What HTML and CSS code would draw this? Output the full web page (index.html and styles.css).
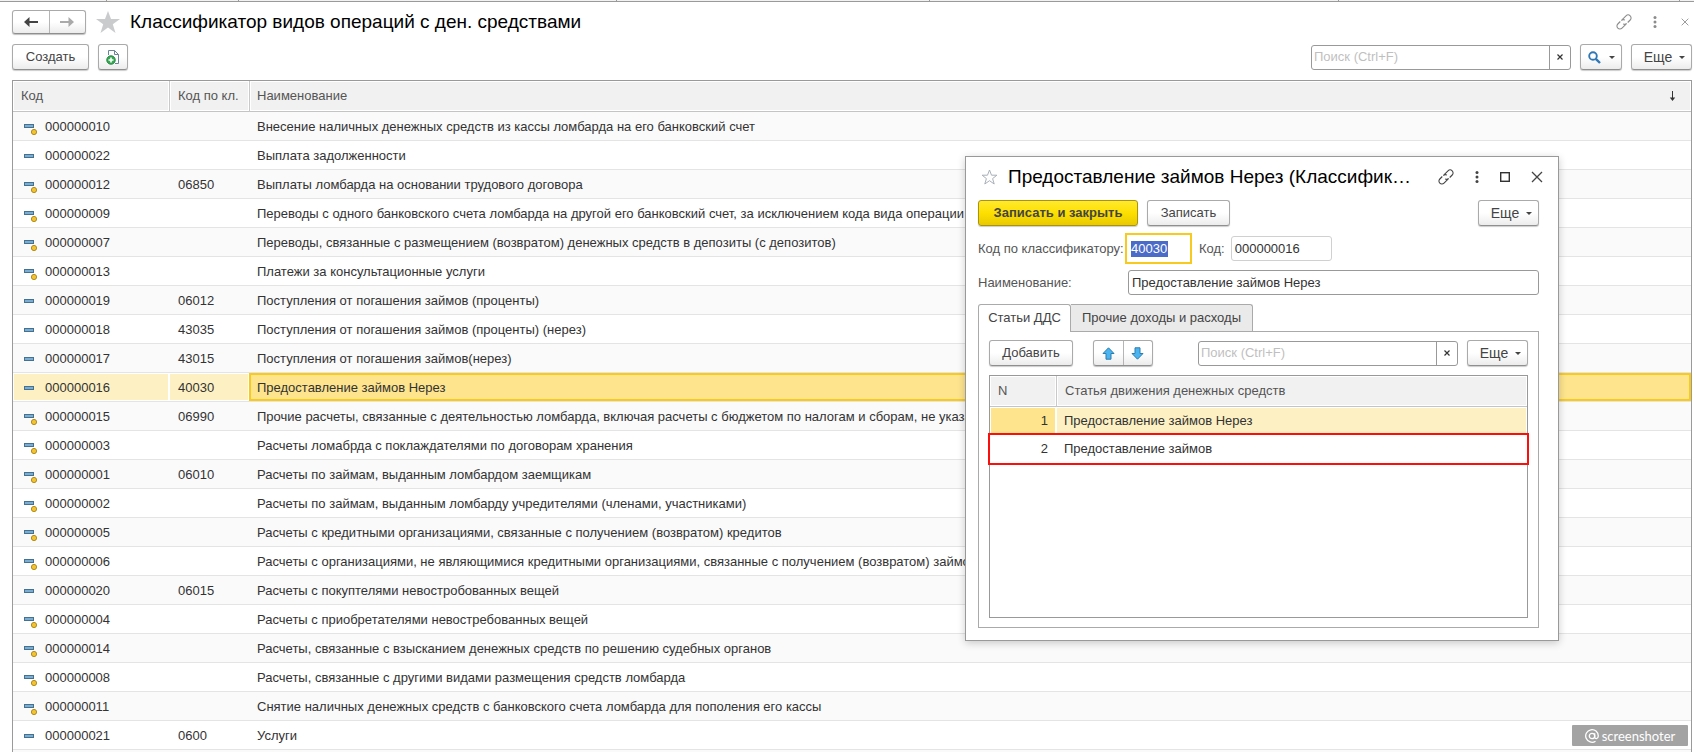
FILE: index.html
```html
<!DOCTYPE html>
<html lang="ru">
<head>
<meta charset="utf-8">
<title>Классификатор видов операций с ден. средствами</title>
<link rel="stylesheet" href="styles.css">
</head>
<body>
<svg class="sprite" aria-hidden="true">
  <symbol id="i-item" viewBox="0 0 15 14">
    <rect x="0" y="4" width="10" height="4" fill="#47708f"/>
    <rect x="1" y="5" width="8" height="2" fill="#78aed4"/>
  </symbol>
  <symbol id="i-pre" viewBox="0 0 15 14">
    <rect x="0" y="3" width="10" height="4" fill="#47708f"/>
    <rect x="1" y="4" width="8" height="2" fill="#78aed4"/>
    <circle cx="10" cy="11" r="2.600" fill="#f4c430" stroke="#b08a1c"/>
  </symbol>
  <symbol id="i-link" viewBox="0 0 16 16">
    <g fill="none" stroke="currentColor" stroke-width="1.100">
      <path d="M6.200 5.600l3.800-3.800a2.900 2.900 0 0 1 4.200 4.200L11.700 8.500"/>
      <path d="M10.700 9.500a2.900 2.900 0 0 1-3.600.4"/>
      <path d="M9.800 10.400l-3.800 3.800a2.900 2.900 0 0 1-4.200-4.200L4.300 7.500"/>
      <path d="M5.300 6.500a2.900 2.900 0 0 1 3.600-.4"/>
    </g>
  </symbol>
  <symbol id="i-dots" viewBox="0 0 4 12">
    <circle cx="2" cy="1.600" r="1.500" fill="currentColor"/><circle cx="2" cy="6" r="1.500" fill="currentColor"/><circle cx="2" cy="10.400" r="1.500" fill="currentColor"/>
  </symbol>
  <symbol id="i-x" viewBox="0 0 12 12">
    <path d="M1 1l10 10M11 1L1 11" stroke="currentColor" stroke-width="1.300" fill="none"/>
  </symbol>
  <symbol id="i-clear" viewBox="0 0 6 6">
    <path d="M.5 .5l5 5M5.500 .5l-5 5" stroke="#333" stroke-width="1.200" fill="none"/>
  </symbol>
</svg>

<div class="strip"><i></i><i></i><i></i><i></i><i></i><i></i></div>

<main class="page">
  <header class="head">
    <div class="pair nav">
      <button type="button" aria-label="Назад"><svg width="14" height="10" viewBox="0 0 14 10"><path d="M5.500 0L0 5l5.500 5V6H14V4H5.500z" fill="#444"/></svg></button>
      <button type="button" aria-label="Вперед"><svg width="14" height="10" viewBox="0 0 14 10"><path d="M8.500 0L14 5l-5.500 5V6H0V4h8.500z" fill="#aaa"/></svg></button>
    </div>
    <svg class="star" width="24" height="22" viewBox="0 0 24 22"><path d="M12 0l3 8h9l-7.200 5.200L19.500 22 12 16.600 4.500 22l2.700-8.800L0 8h9z" fill="#c9cbcd"/></svg>
    <h1>Классификатор видов операций с ден. средствами</h1>
    <div class="tools">
      <svg width="16" height="16"><use href="#i-link"/></svg>
      <svg class="dots" width="4" height="12"><use href="#i-dots"/></svg>
      <svg width="8" height="8"><use href="#i-x"/></svg>
    </div>
  </header>

  <div class="bar">
    <button type="button" class="btn create">Создать</button>
    <button type="button" class="btn copy" aria-label="Создать копированием"><svg width="14" height="16" viewBox="0 0 14 16"><path d="M2.500 6V1.500h6l4 4v9H9" fill="#fff" stroke="#6b8499"/><path d="M8.500 1.500v4h4" fill="none" stroke="#6b8499"/><circle cx="5" cy="11" r="4.300" fill="#34a853" stroke="#1d7f38" stroke-width=".8"/><path d="M5 8.500v5M2.500 11h5" stroke="#fff" stroke-width="1.600"/></svg></button>
    <div class="search"><input type="text" placeholder="Поиск (Ctrl+F)" aria-label="Поиск"><button type="button" aria-label="Очистить"><svg width="6" height="6"><use href="#i-clear"/></svg></button></div>
    <button type="button" class="btn find" aria-label="Найти"><svg width="13" height="13" viewBox="0 0 13 13"><circle cx="5" cy="5" r="3.800" fill="none" stroke="#2f78b5" stroke-width="1.900"/><path d="M7.800 7.800l4.200 4.200" stroke="#2f78b5" stroke-width="2.400"/></svg><i class="caret"></i></button>
    <button type="button" class="btn more">Еще<i class="caret"></i></button>
  </div>

  <table class="list">
    <colgroup><col class="c-code"><col class="c-cls"><col></colgroup>
    <thead><tr><th>Код</th><th>Код по кл.</th><th><div class="sort">Наименование<svg width="7" height="10" viewBox="0 0 7 10"><path d="M3.500 0v8" stroke="#333"/><path d="M.8 6.500h5.400L3.500 10z" fill="#333"/></svg></div></th></tr></thead>
    <tbody>
      <tr><td><svg class="ic"><use href="#i-pre"/></svg>000000010</td><td></td><td>Внесение наличных денежных средств из кассы ломбарда на его банковский счет</td></tr>
      <tr><td><svg class="ic"><use href="#i-item"/></svg>000000022</td><td></td><td>Выплата задолженности</td></tr>
      <tr><td><svg class="ic"><use href="#i-pre"/></svg>000000012</td><td>06850</td><td>Выплаты ломбарда на основании трудового договора</td></tr>
      <tr><td><svg class="ic"><use href="#i-pre"/></svg>000000009</td><td></td><td>Переводы с одного банковского счета ломбарда на другой его банковский счет, за исключением кода вида операции</td></tr>
      <tr><td><svg class="ic"><use href="#i-pre"/></svg>000000007</td><td></td><td>Переводы, связанные с размещением (возвратом) денежных средств в депозиты (с депозитов)</td></tr>
      <tr><td><svg class="ic"><use href="#i-pre"/></svg>000000013</td><td></td><td>Платежи за консультационные услуги</td></tr>
      <tr><td><svg class="ic"><use href="#i-item"/></svg>000000019</td><td>06012</td><td>Поступления от погашения займов (проценты)</td></tr>
      <tr><td><svg class="ic"><use href="#i-item"/></svg>000000018</td><td>43035</td><td>Поступления от погашения займов (проценты) (нерез)</td></tr>
      <tr><td><svg class="ic"><use href="#i-item"/></svg>000000017</td><td>43015</td><td>Поступления от погашения займов(нерез)</td></tr>
      <tr class="current"><td><svg class="ic"><use href="#i-item"/></svg>000000016</td><td>40030</td><td>Предоставление займов Нерез</td></tr>
      <tr><td><svg class="ic"><use href="#i-pre"/></svg>000000015</td><td>06990</td><td>Прочие расчеты, связанные с деятельностью ломбарда, включая расчеты с бюджетом по налогам и сборам, не указанные</td></tr>
      <tr><td><svg class="ic"><use href="#i-pre"/></svg>000000003</td><td></td><td>Расчеты ломабрда с поклаждателями по договорам хранения</td></tr>
      <tr><td><svg class="ic"><use href="#i-pre"/></svg>000000001</td><td>06010</td><td>Расчеты по займам, выданным ломбардом заемщикам</td></tr>
      <tr><td><svg class="ic"><use href="#i-pre"/></svg>000000002</td><td></td><td>Расчеты по займам, выданным ломбарду учредителями (членами, участниками)</td></tr>
      <tr><td><svg class="ic"><use href="#i-pre"/></svg>000000005</td><td></td><td>Расчеты с кредитными организациями, связанные с получением (возвратом) кредитов</td></tr>
      <tr><td><svg class="ic"><use href="#i-pre"/></svg>000000006</td><td></td><td>Расчеты с организациями, не являющимися кредитными организациями, связанные с получением (возвратом) займов</td></tr>
      <tr><td><svg class="ic"><use href="#i-item"/></svg>000000020</td><td>06015</td><td>Расчеты с покуптелями невостробованных вещей</td></tr>
      <tr><td><svg class="ic"><use href="#i-pre"/></svg>000000004</td><td></td><td>Расчеты с приобретателями невостребованных вещей</td></tr>
      <tr><td><svg class="ic"><use href="#i-pre"/></svg>000000014</td><td></td><td>Расчеты, связанные с взысканием денежных средств по решению судебных органов</td></tr>
      <tr><td><svg class="ic"><use href="#i-pre"/></svg>000000008</td><td></td><td>Расчеты, связанные с другими видами размещения средств ломбарда</td></tr>
      <tr><td><svg class="ic"><use href="#i-pre"/></svg>000000011</td><td></td><td>Снятие наличных денежных средств с банковского счета ломбарда для пополения его кассы</td></tr>
      <tr><td><svg class="ic"><use href="#i-item"/></svg>000000021</td><td>0600</td><td>Услуги</td></tr>
      <tr><td></td><td></td><td></td></tr>
    </tbody>
  </table>
</main>

<section class="dialog" role="dialog" aria-labelledby="dlg-title">
  <header class="dlg-head">
    <svg width="17" height="16" viewBox="0 0 17 16"><path d="M8.500 1l2 5.200h5.400l-4.300 3.400 1.600 5.400-4.700-3.300L3.800 15l1.600-5.400L1.100 6.200h5.400z" fill="#fff" stroke="#a9b0b8"/></svg>
    <h2 id="dlg-title">Предоставление займов Нерез (Классифик…</h2>
    <div class="dlg-tools">
      <svg width="16" height="16"><use href="#i-link"/></svg>
      <svg width="4" height="12"><use href="#i-dots"/></svg>
      <svg width="10" height="10" viewBox="0 0 10 10"><rect x=".7" y=".7" width="8.600" height="8.600" fill="none" stroke="#333" stroke-width="1.400"/></svg>
      <svg width="12" height="12"><use href="#i-x"/></svg>
    </div>
  </header>
  <div class="cmds">
    <button type="button" class="btn primary">Записать и закрыть</button>
    <button type="button" class="btn save">Записать</button>
    <button type="button" class="btn more">Еще<i class="caret"></i></button>
  </div>
  <div class="row codes">
    <label class="wide" for="cls">Код по классификатору:</label>
    <div class="focus"><input id="cls" type="text" value="40030" size="5"></div>
    <label for="code">Код:</label>
    <input id="code" class="field ro" type="text" value="000000016" readonly>
  </div>
  <div class="row names">
    <label class="wide" for="nm">Наименование:</label>
    <input id="nm" class="field grow" type="text" value="Предоставление займов Нерез">
  </div>
  <div class="tabs" role="tablist">
    <button type="button" role="tab" aria-selected="true" class="tab on">Статьи ДДС</button>
    <button type="button" role="tab" aria-selected="false" class="tab">Прочие доходы и расходы</button>
  </div>
  <div class="panel">
    <div class="bar">
      <button type="button" class="btn add">Добавить</button>
      <div class="pair move">
        <button type="button" aria-label="Вверх"><svg width="13" height="13" viewBox="0 0 13 13"><path d="M6.500.8L12 6.500H9v5.700H4V6.500H1z" fill="#4ab4f0" stroke="#2d7cae"/></svg></button>
        <button type="button" aria-label="Вниз"><svg width="13" height="13" viewBox="0 0 13 13"><path d="M6.500 12.200L1 6.500h3V.8h5v5.700h3z" fill="#4ab4f0" stroke="#2d7cae"/></svg></button>
      </div>
      <div class="search"><input type="text" placeholder="Поиск (Ctrl+F)" aria-label="Поиск по статьям"><button type="button" aria-label="Очистить"><svg width="6" height="6"><use href="#i-clear"/></svg></button></div>
      <button type="button" class="btn more">Еще<i class="caret"></i></button>
    </div>
    <div class="grid">
      <table class="sub">
        <colgroup><col class="c-n"><col></colgroup>
        <thead><tr><th>N</th><th>Статья движения денежных средств</th></tr></thead>
        <tbody>
          <tr class="sel"><td>1</td><td>Предоставление займов Нерез</td></tr>
          <tr class="marked"><td>2</td><td>Предоставление займов</td></tr>
        </tbody>
      </table>
    </div>
  </div>
</section>

<div class="stamp"><svg width="14" height="14" viewBox="0 0 14 14"><g fill="none" stroke="#fff" stroke-width="1.300"><circle cx="7" cy="7" r="2.700"/><path d="M9.700 4.300v3.700c0 2.400 3.600 2 3.600-1a6.300 6.300 0 1 0-2.800 5.200"/></g></svg><span>screenshoter</span></div>
</body>
</html>
```
FILE: styles.css
```css
* { box-sizing: border-box; }
html, body { height: 100%; }
body {
  margin: 0;
  overflow: hidden;
  position: relative;
  background: #fff;
  color: #333;
  font: 13px/16px "Liberation Sans", Arial, sans-serif;
}
button, input { font: inherit; color: inherit; margin: 0; }
input { outline: 0; min-width: 0; }
svg { flex: none; display: block; }
.sprite { position: absolute; width: 0; height: 0; }

.strip {
  height: 2px;
  display: grid;
  grid-template-columns: 107px 132px 378px 313px 409px 341px 1fr;
  background: #f2f2f2;
  border-bottom: 1px solid #9a9a9a;
}
.strip i { border-right: 1px solid #9a9a9a; }

.page { padding: 8px 2px 0 12px; }

.head { display: flex; align-items: center; height: 24px; }
.pair {
  display: flex;
  border: 1px solid #aaa;
  border-bottom-color: #8f8f8f;
  border-radius: 3px;
  box-shadow: 0 1px 1px rgba(0, 0, 0, .25);
  background: linear-gradient(#fff 50%, #ececec);
}
.pair button {
  flex: 1;
  display: flex;
  align-items: center;
  justify-content: center;
  padding: 0;
  border: 0;
  background: none;
}
.pair button + button { border-left: 1px solid #b5b5b5; }
.nav { width: 74px; height: 24px; }
.star { margin-left: 10px; }
h1, h2 { margin: 0 0 0 10px; font-size: 19px; line-height: 24px; font-weight: 400; color: #000; white-space: nowrap; }
.tools { margin-left: auto; display: flex; align-items: center; color: #8c8c8c; padding-right: 3px; gap: 21px; }
.tools .dots { margin-right: 3px; }

.bar { display: flex; align-items: center; height: 26px; }
.page .bar { margin: 10px 0; }
.btn {
  display: flex;
  align-items: center;
  justify-content: center;
  height: 26px;
  padding: 0;
  border: 1px solid #aaa;
  border-bottom-color: #8f8f8f;
  border-radius: 3px;
  box-shadow: 0 1px 1px rgba(0, 0, 0, .2);
  background: linear-gradient(#fff 50%, #ececec);
  color: #444;
  white-space: nowrap;
}
.create { width: 77px; }
.copy { width: 30px; margin-left: 9px; }
.caret { width: 6px; border: 3px solid transparent; border-top-color: #444; border-bottom: 0; }
.find { width: 42px; gap: 8px; margin: 0 9px; }
.more { width: 61px; gap: 7px; padding-left: 6px; font-size: 14px; }
.search { display: flex; width: 260px; height: 25px; margin-left: auto; border: 1px solid #999; border-radius: 3px; background: #fff; }
.search input { flex: 1; border: 0; padding: 0 2px; background: none; }
.search input::placeholder { color: #bfbfbf; opacity: 1; }
.search button { width: 21px; padding: 0; border: 0; border-left: 1px solid #999; background: none; display: flex; align-items: center; justify-content: center; }

table { border-collapse: separate; border-spacing: 0; table-layout: fixed; width: 100%; }
th { text-align: left; font-weight: 400; color: #555; background: #f1f1f1; border-bottom: 1px solid #c4c4c4; box-shadow: inset 0 0 0 1px #fff; }
th + th { border-left: 1px solid #c9c9c9; }
td { white-space: nowrap; overflow: hidden; }
.list { border: 1px solid #9a9a9a; border-bottom: 0; }
.c-code { width: 156px; }
.c-cls { width: 80px; }
.list th { height: 31px; padding: 0 7px 0 8px; }
.list th:last-child { padding-left: 7px; }
.sort { display: flex; justify-content: space-between; align-items: center; padding-right: 8px; }
.list td { height: 29px; padding: 2px 8px 0; border-bottom: 1px solid #e4e4e4; }
.list td:nth-child(2) { padding-left: 9px; }
.list tbody tr:nth-child(odd) { background: #fafafa; }
.list td:first-child { padding-left: 11px; }
.ic { display: inline-block; width: 15px; height: 14px; margin-right: 6px; vertical-align: -4px; }
.list .current td { background: #fdf1c4; box-shadow: inset 0 0 0 1px #fff; }
.list .current td:last-child { background: #fde48d; box-shadow: inset 0 0 0 2px #f9ca1e; }

.dialog {
  position: absolute;
  left: 965px;
  top: 156px;
  width: 594px;
  padding: 9px 19px 12px 12px;
  background: #fff;
  border: 1px solid #999;
  box-shadow: 0 2px 8px rgba(0, 0, 0, .2);
}
.dlg-head { display: flex; align-items: center; height: 22px; padding-left: 3px; }
.dlg-tools { margin-left: auto; margin-right: -4px; display: flex; align-items: center; gap: 21px; color: #444; }
.cmds { display: flex; gap: 9px; margin-top: 12px; }
.cmds .more { margin-left: auto; }
.primary { width: 160px; font-weight: 700; border-color: #a89410; background: linear-gradient(#ffe92e, #fde000 50%, #e9c900); }
.save { width: 83px; }
.row { display: flex; align-items: center; color: #555; }
.codes { margin-top: 7px; height: 31px; }
.names { margin-top: 6px; height: 25px; }
.wide { width: 147px; }
.focus { width: 67px; height: 31px; margin-right: 7px; border: 2px solid #f9ca1e; background: #fff; padding: 4px; display: flex; align-items: center; }
.focus input { width: 37px; height: 16px; border: 0; padding: 0; background: #4a6bc8; color: #fff; }
.field { height: 25px; border: 1px solid #999; border-radius: 3px; padding: 0 3px; color: #333; }
.codes .field { width: 101px; margin-left: 6px; }
.ro { border-color: #d0d0d0; }
.grow { flex: 1; }
.names .wide { width: 150px; }
.tabs { display: flex; margin-top: 9px; height: 27px; }
.tab { width: 182px; padding: 0; border: 1px solid #aaa; border-bottom: 0; border-left: 0; border-radius: 0 3px 0 0; background: #eaeaea; color: #444; }
.tab.on { width: 93px; height: 28px; padding-bottom: 1px; border-left: 1px solid #aaa; border-radius: 3px 3px 0 0; background: #fff; position: relative; }
.panel { border: 1px solid #aaa; padding: 8px 10px 9px; }
.add { width: 84px; }
.move { width: 60px; height: 26px; margin-left: 20px; }
.panel .more { margin-left: 9px; }
.grid { margin-top: 9px; height: 243px; border: 1px solid #999; }
.c-n { width: 66px; }
.sub th { height: 31px; padding: 0 8px; }
.sub td { height: 28px; padding: 0 8px; }
.sub td:first-child { text-align: right; }
.sub .sel td { background: #fdf1c4; box-shadow: inset 0 0 0 1px #fff; }
.sub .sel td:first-child { background: #fde48d; }
.marked { outline: 2px solid #fb0f0c; }

.stamp {
  position: absolute;
  right: 6px;
  bottom: 6px;
  width: 116px;
  height: 21px;
  display: flex;
  align-items: center;
  justify-content: center;
  gap: 3px;
  border-radius: 1px;
  background: #a3a3a3;
  color: #fff;
  font: 13px/20px Lato, sans-serif;
}
```
